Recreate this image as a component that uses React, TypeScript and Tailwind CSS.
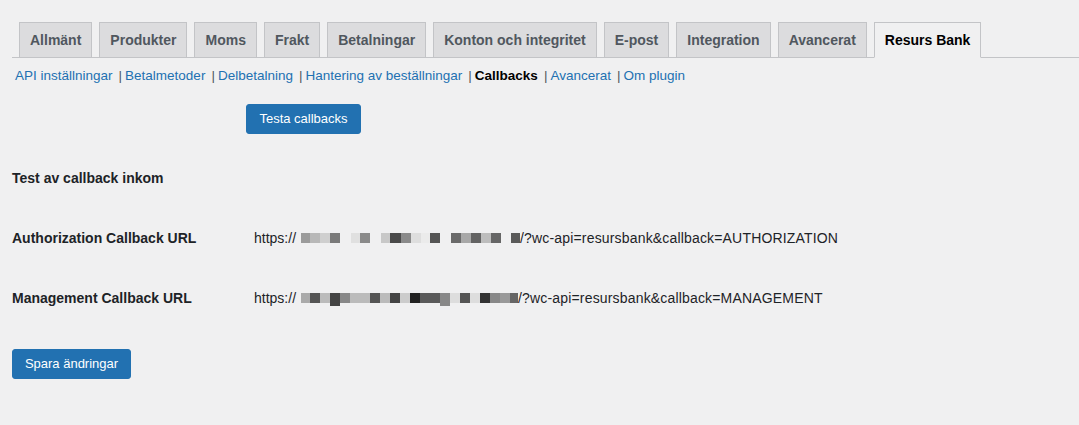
import React from "react";

const tabs = [
  { label: "Allmänt" },
  { label: "Produkter" },
  { label: "Moms" },
  { label: "Frakt" },
  { label: "Betalningar" },
  { label: "Konton och integritet" },
  { label: "E-post" },
  { label: "Integration" },
  { label: "Avancerat" },
  { label: "Resurs Bank", active: true },
];

const sections = [
  "API inställningar",
  "Betalmetoder",
  "Delbetalning",
  "Hantering av beställningar",
  "Callbacks",
  "Avancerat",
  "Om plugin",
];

// blurred host name, drawn as grey squares
const authBlocks = [
  "w-[9px] bg-[#9b9b9b]",
  "w-[10px] bg-[#b8b8b8]",
  "w-[10px] bg-[#cfcfcf]",
  "w-[10px] bg-[#7a7a7a]",
  "w-[11px]",
  "w-[9px] bg-[#e0e0e0]",
  "w-[10px] bg-[#8a8a8a]",
  "w-[11px]",
  "w-[9px] bg-[#c8c8c8]",
  "w-[11px] bg-[#4a4a4a]",
  "w-[10px] bg-[#8a8a8a]",
  "w-[10px] bg-[#dedede]",
  "w-[9px] bg-[#ebebeb]",
  "w-[10px] bg-[#555555]",
  "w-[11px]",
  "w-[10px] bg-[#6a6a6a]",
  "w-[10px] bg-[#a8a8a8]",
  "w-[10px] bg-[#636363]",
  "w-[10px] bg-[#bdbdbd]",
  "w-[10px] bg-[#666666]",
  "w-[10px]",
  "w-[9px] bg-[#5a5a5a]",
];

const mgmtBlocks = [
  "w-[9px] bg-[#aaaaaa]",
  "w-[10px] bg-[#555555]",
  "w-[10px] bg-[#bbbbbb]",
  "w-[10px] bg-[#444444] h-[13px] align-[-3px]",
  "w-[10px] bg-[#888888]",
  "w-[20px] bg-[#bbbbbb]",
  "w-[10px] bg-[#555555]",
  "w-[10px] bg-[#bbbbbb]",
  "w-[10px] bg-[#444444]",
  "w-[10px] bg-[#cccccc]",
  "w-[10px] bg-[#222222]",
  "w-[20px] bg-[#5a5a5a]",
  "w-[10px] bg-[#888888] h-[13px] align-[-3px]",
  "w-[10px] bg-[#dddddd]",
  "w-[10px] bg-[#555555]",
  "w-[10px] bg-[#dddddd]",
  "w-[10px] bg-[#333333]",
  "w-[10px] bg-[#888888]",
  "w-[10px] bg-[#999999]",
  "w-[8px] bg-[#666666]",
];

function CallbackUrl({ blocks, tail }: { blocks: string[]; tail: string }) {
  return (
    <span className="text-[14px] text-[#1d2327] whitespace-nowrap">
      https://
      <span className="ml-[5px]">
        {blocks.map((b, i) => (
          <span key={i} className={`inline-block h-[10px] ${b}`} />
        ))}
      </span>
      <span className="tracking-[0.17px]">{tail}</span>
    </span>
  );
}

export default function App() {
  return (
    <div
      className="w-[1079px] h-[425px] overflow-hidden bg-[#f0f0f1] text-[#1d2327]"
      style={{ fontFamily: '"Liberation Sans", Arial, sans-serif' }}
    >
      <nav className="ml-[12px] pt-[22px] flex border-b border-[#c3c4c7]">
        {tabs.map((t) => (
          <a
            key={t.label}
            className={`ml-[7px] -mb-px h-[36px] px-[10px] flex items-center border text-[14px] font-bold whitespace-nowrap ${
              t.active
                ? "bg-[#f0f0f1] text-black border-[#c3c4c7] border-b-[#f0f0f1]"
                : "bg-[#dcdcde] text-[#50575e] border-[#c3c4c7]"
            }`}
          >
            {t.label}
          </a>
        ))}
      </nav>

      <div className="pl-[12px]">
        <ul className="mt-[5px] h-[26px] flex items-center text-[13.5px] pl-[3px]">
          {sections.map((s, i) => (
            <li key={s} className="flex items-center">
              {s === "Callbacks" ? (
                <span className="font-bold text-black">{s}</span>
              ) : (
                <a className="text-[#2271b1]">{s}</a>
              )}
              {i < sections.length - 1 && (
                <span className="ml-[6px] mr-[3px] text-[#50575e]">|</span>
              )}
            </li>
          ))}
        </ul>

        <div className="mt-[15px] pl-[234px]">
          <button className="w-[115px] h-[30px] rounded-[3px] bg-[#2271b1] border border-[#2271b1] text-white text-[13px]">
            Testa callbacks
          </button>
        </div>

        <h3 className="mt-[34px] h-[20px] leading-[20px] text-[14px] font-bold">
          Test av callback inkom
        </h3>

        <div className="mt-[40px] h-[20px] flex items-center">
          <div className="w-[242px] text-[14px] font-bold">Authorization Callback URL</div>
          <CallbackUrl blocks={authBlocks} tail="/?wc-api=resursbank&callback=AUTHORIZATION" />
        </div>

        <div className="mt-[40px] h-[20px] flex items-center">
          <div className="w-[242px] text-[14px] font-bold">Management Callback URL</div>
          <CallbackUrl blocks={mgmtBlocks} tail="/?wc-api=resursbank&callback=MANAGEMENT" />
        </div>

        <button className="mt-[41px] w-[119px] h-[30px] rounded-[3px] bg-[#2271b1] border border-[#2271b1] text-white text-[13px]">
          Spara ändringar
        </button>
      </div>
    </div>
  );
}
